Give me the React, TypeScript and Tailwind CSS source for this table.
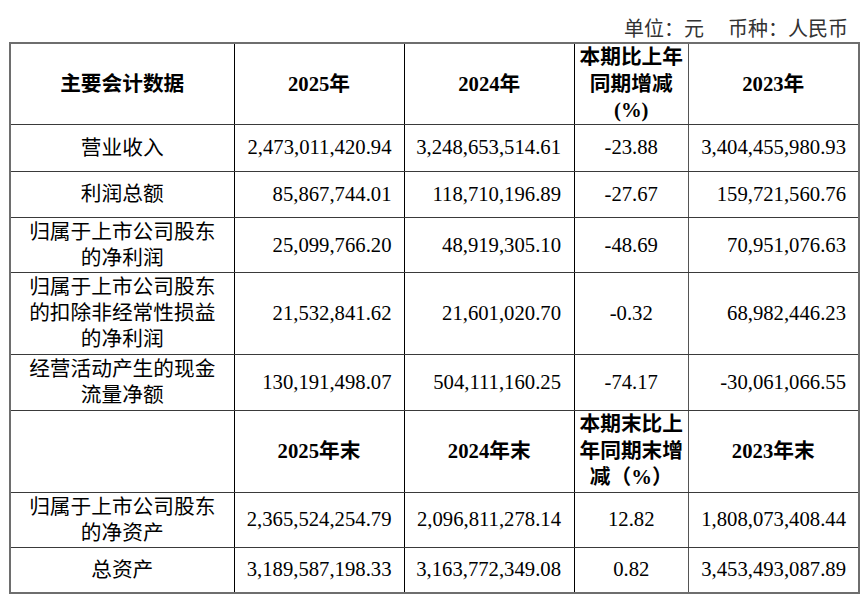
import React from 'react';

type Row = {
    label: string[];
    values: string[];
    change: string;
    h: string;
};

const incomeRows: Row[] = [
    { label: ['营业收入'], values: ['2,473,011,420.94', '3,248,653,514.61', '3,404,455,980.93'], change: '-23.88', h: 'h-[46.5px]' },
    { label: ['利润总额'], values: ['85,867,744.01', '118,710,196.89', '159,721,560.76'], change: '-27.67', h: 'h-[46.5px]' },
    { label: ['归属于上市公司股东', '的净利润'], values: ['25,099,766.20', '48,919,305.10', '70,951,076.63'], change: '-48.69', h: 'h-[55px]' },
    { label: ['归属于上市公司股东', '的扣除非经常性损益', '的净利润'], values: ['21,532,841.62', '21,601,020.70', '68,982,446.23'], change: '-0.32', h: 'h-[81.5px]' },
    { label: ['经营活动产生的现金', '流量净额'], values: ['130,191,498.07', '504,111,160.25', '-30,061,066.55'], change: '-74.17', h: 'h-[56px]' },
];

const balanceRows: Row[] = [
    { label: ['归属于上市公司股东', '的净资产'], values: ['2,365,524,254.79', '2,096,811,278.14', '1,808,073,408.44'], change: '12.82', h: 'h-[55px]' },
    { label: ['总资产'], values: ['3,189,587,198.33', '3,163,772,349.08', '3,453,493,087.89'], change: '0.82', h: 'h-[46px]' },
];

const cellBase = 'border-y border-y-[#3a3a3a] p-0 align-middle';

function HeaderRow({ first, cols, change, h }: { first: string; cols: string[]; change: string[]; h: string }) {
    return (
        <tr className={h}>
            <td className={`${cellBase} border-r border-r-black text-center font-bold`}>{first}</td>
            <td className={`${cellBase} border-r border-r-black text-center font-bold`}>{cols[0]}</td>
            <td className={`${cellBase} border-r border-r-black text-center font-bold`}>{cols[1]}</td>
            <td className={`${cellBase} border-r border-r-[#555] text-center font-bold leading-[26.7px]`}>
                {change.map((l) => (
                    <div key={l}>{l}</div>
                ))}
            </td>
            <td className={`${cellBase} text-center font-bold`}>{cols[2]}</td>
        </tr>
    );
}

function DataRow({ row }: { row: Row }) {
    return (
        <tr className={row.h}>
            <td className={`${cellBase} border-r border-r-black text-center leading-[26px]`}>
                {row.label.map((l) => (
                    <div key={l}>{l}</div>
                ))}
            </td>
            <td className={`${cellBase} border-r border-r-black text-right pr-3`}>{row.values[0]}</td>
            <td className={`${cellBase} border-r border-r-black text-right pr-[13px]`}>{row.values[1]}</td>
            <td className={`${cellBase} border-r border-r-[#555] text-center`}>{row.change}</td>
            <td className={`${cellBase} text-right pr-3`}>{row.values[2]}</td>
        </tr>
    );
}

export default function App() {
    return (
        <div
            className="w-[863px] h-[599px] bg-white text-black pl-[9px] text-[20.7px]"
            style={{ fontFamily: '"Liberation Serif", "Noto Sans CJK SC", serif' }}
        >
            {/* 单位 */}
            <div className="h-[42px] flex items-end justify-end pr-[15px] pb-[3px] text-[20px] leading-none text-[#333]">
                <span>单位：元</span>
                <span className="ml-[24px]">币种：人民币</span>
            </div>

            <table className="border-collapse border-2 border-[#6e6e6e] table-fixed w-[849px]">
                <colgroup>
                    <col className="w-[224px]" />
                    <col className="w-[170px]" />
                    <col className="w-[170.5px]" />
                    <col className="w-[113.5px]" />
                    <col className="w-[171px]" />
                </colgroup>
                <tbody>
                    <HeaderRow
                        first="主要会计数据"
                        cols={['2025年', '2024年', '2023年']}
                        change={['本期比上年', '同期增减', '(%)']}
                        h="h-[79px]"
                    />
                    {incomeRows.map((r) => (
                        <DataRow key={r.label.join('')} row={r} />
                    ))}
                    <HeaderRow
                        first=""
                        cols={['2025年末', '2024年末', '2023年末']}
                        change={['本期末比上', '年同期末增', '减（%）']}
                        h="h-[82px]"
                    />
                    {balanceRows.map((r) => (
                        <DataRow key={r.label.join('')} row={r} />
                    ))}
                </tbody>
            </table>
        </div>
    );
}
